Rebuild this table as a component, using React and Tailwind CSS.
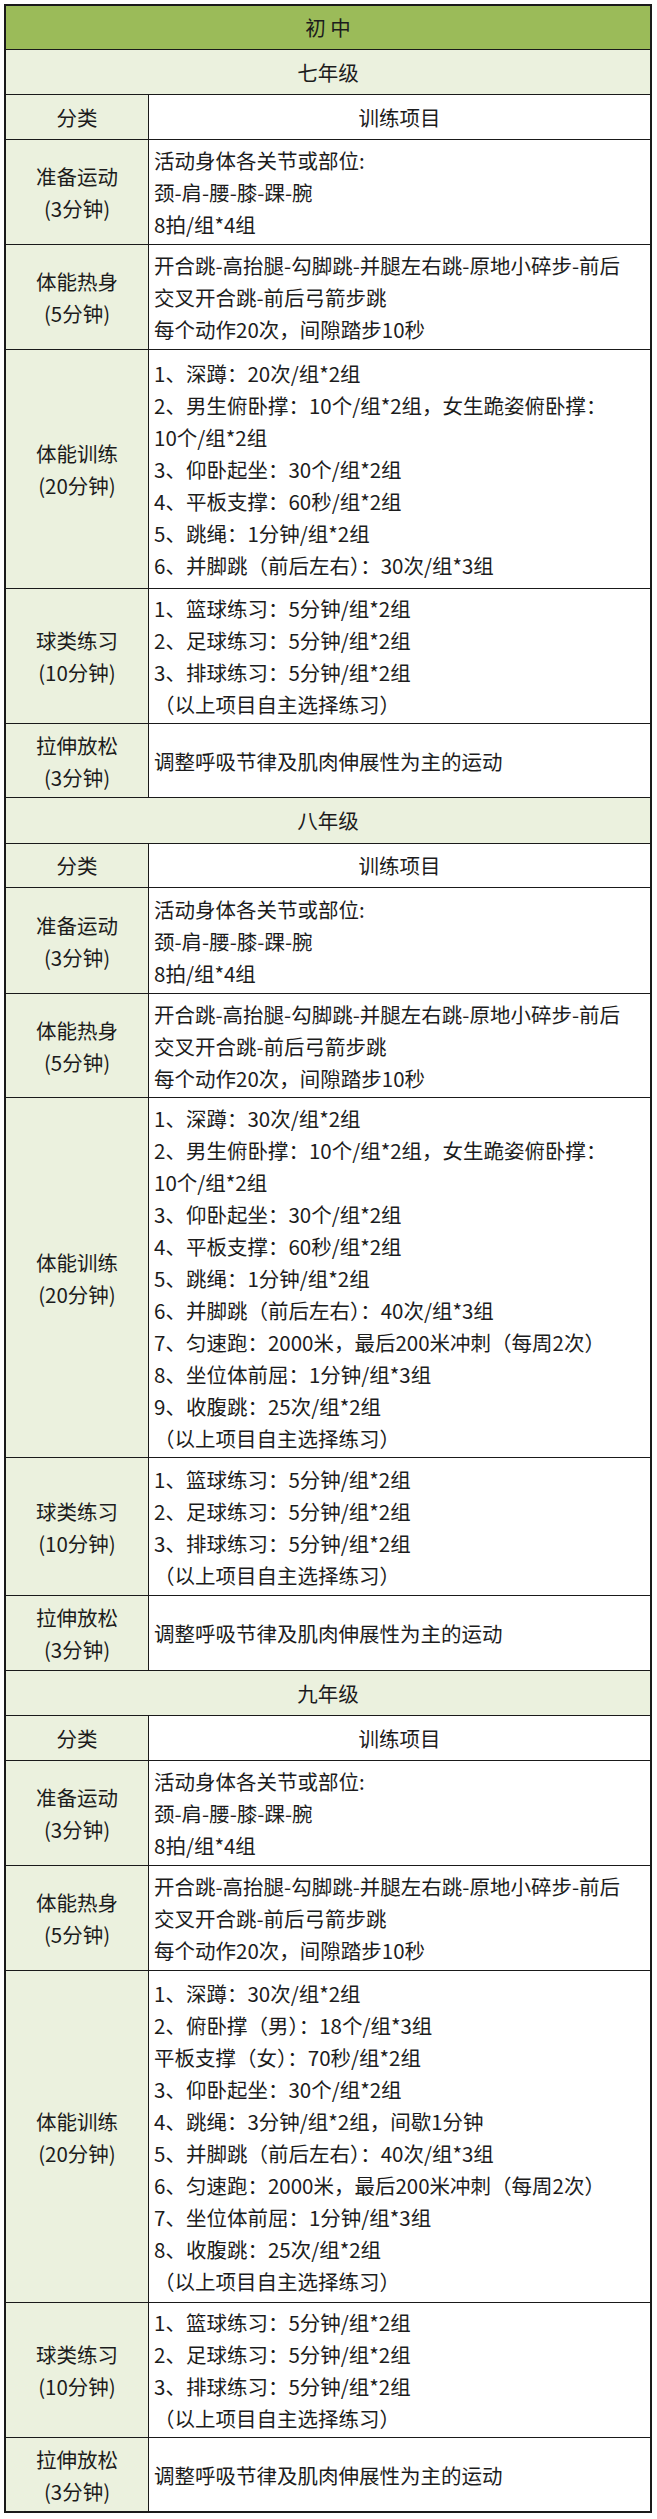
import React from "react";

const grades = [
  {
    name: "七年级",
    h: ["h-[45px]", "h-[45px]", "h-[105px]", "h-[105px]", "h-[239px]", "h-[135px]", "h-[74px]"],
    training: [
      "1、深蹲：20次/组*2组",
      "2、男生俯卧撑：10个/组*2组，女生跪姿俯卧撑：",
      "10个/组*2组",
      "3、仰卧起坐：30个/组*2组",
      "4、平板支撑：60秒/组*2组",
      "5、跳绳：1分钟/组*2组",
      "6、并脚跳（前后左右）：30次/组*3组",
    ],
  },
  {
    name: "八年级",
    h: ["h-[46px]", "h-[44px]", "h-[106px]", "h-[104px]", "h-[360px]", "h-[138px]", "h-[75px]"],
    training: [
      "1、深蹲：30次/组*2组",
      "2、男生俯卧撑：10个/组*2组，女生跪姿俯卧撑：",
      "10个/组*2组",
      "3、仰卧起坐：30个/组*2组",
      "4、平板支撑：60秒/组*2组",
      "5、跳绳：1分钟/组*2组",
      "6、并脚跳（前后左右）：40次/组*3组",
      "7、匀速跑：2000米，最后200米冲刺（每周2次）",
      "8、坐位体前屈：1分钟/组*3组",
      "9、收腹跳：25次/组*2组",
      "（以上项目自主选择练习）",
    ],
  },
  {
    name: "九年级",
    h: ["h-[45px]", "h-[45px]", "h-[105px]", "h-[105px]", "h-[332px]", "h-[135px]", "h-[74px]"],
    training: [
      "1、深蹲：30次/组*2组",
      "2、俯卧撑（男）：18个/组*3组",
      "平板支撑（女）：70秒/组*2组",
      "3、仰卧起坐：30个/组*2组",
      "4、跳绳：3分钟/组*2组，间歇1分钟",
      "5、并脚跳（前后左右）：40次/组*3组",
      "6、匀速跑：2000米，最后200米冲刺（每周2次）",
      "7、坐位体前屈：1分钟/组*3组",
      "8、收腹跳：25次/组*2组",
      "（以上项目自主选择练习）",
    ],
  },
];

const warmup = ["活动身体各关节或部位:", "颈-肩-腰-膝-踝-腕", "8拍/组*4组"];
const heat = [
  "开合跳-高抬腿-勾脚跳-并腿左右跳-原地小碎步-前后",
  "交叉开合跳-前后弓箭步跳",
  "每个动作20次，间隙踏步10秒",
];
const ball = [
  "1、篮球练习：5分钟/组*2组",
  "2、足球练习：5分钟/组*2组",
  "3、排球练习：5分钟/组*2组",
  "（以上项目自主选择练习）",
];
const stretch = ["调整呼吸节律及肌肉伸展性为主的运动"];

const Row = ({ h, label, lines }) => (
  <div className={`flex border-t border-[#1a1a1a] ${h}`}>
    <div className="w-[143px] shrink-0 border-r border-[#1a1a1a] bg-[#ebf1de] flex flex-col items-center justify-center leading-[32px]">
      {label.map((l) => (
        <div key={l}>{l}</div>
      ))}
    </div>
    <div className="flex-1 bg-white flex flex-col justify-center pl-[5px] leading-[32px]">
      {lines.map((l, i) => (
        <div key={i} className="whitespace-nowrap">
          {l}
        </div>
      ))}
    </div>
  </div>
);

const Grade = ({ g }) => (
  <>
    <div className={`flex items-center justify-center border-t border-[#1a1a1a] bg-[#ebf1de] ${g.h[0]}`}>
      {g.name}
    </div>
    <div className={`flex border-t border-[#1a1a1a] ${g.h[1]}`}>
      <div className="w-[143px] shrink-0 border-r border-[#1a1a1a] bg-[#ebf1de] flex items-center justify-center">
        分类
      </div>
      <div className="flex-1 bg-white flex items-center justify-center">训练项目</div>
    </div>
    <Row h={g.h[2]} label={["准备运动", "(3分钟)"]} lines={warmup} />
    <Row h={g.h[3]} label={["体能热身", "(5分钟)"]} lines={heat} />
    <Row h={g.h[4]} label={["体能训练", "(20分钟)"]} lines={g.training} />
    <Row h={g.h[5]} label={["球类练习", "(10分钟)"]} lines={ball} />
    <Row h={g.h[6]} label={["拉伸放松", "(3分钟)"]} lines={stretch} />
  </>
);

export default function App() {
  return (
    <div className="w-[657px] h-[2519px] bg-white pt-[4px] font-['Noto_Sans_CJK_SC','Noto_Sans',sans-serif] text-[20.5px] text-[#1c1c1c]">
      <div className="ml-[4px] w-[648px] border-2 border-[#1a1a1a]">
        <div className="h-[43px] bg-[#9bbb59] flex items-center justify-center">初 中</div>
        {grades.map((g) => (
          <Grade key={g.name} g={g} />
        ))}
      </div>
    </div>
  );
}
